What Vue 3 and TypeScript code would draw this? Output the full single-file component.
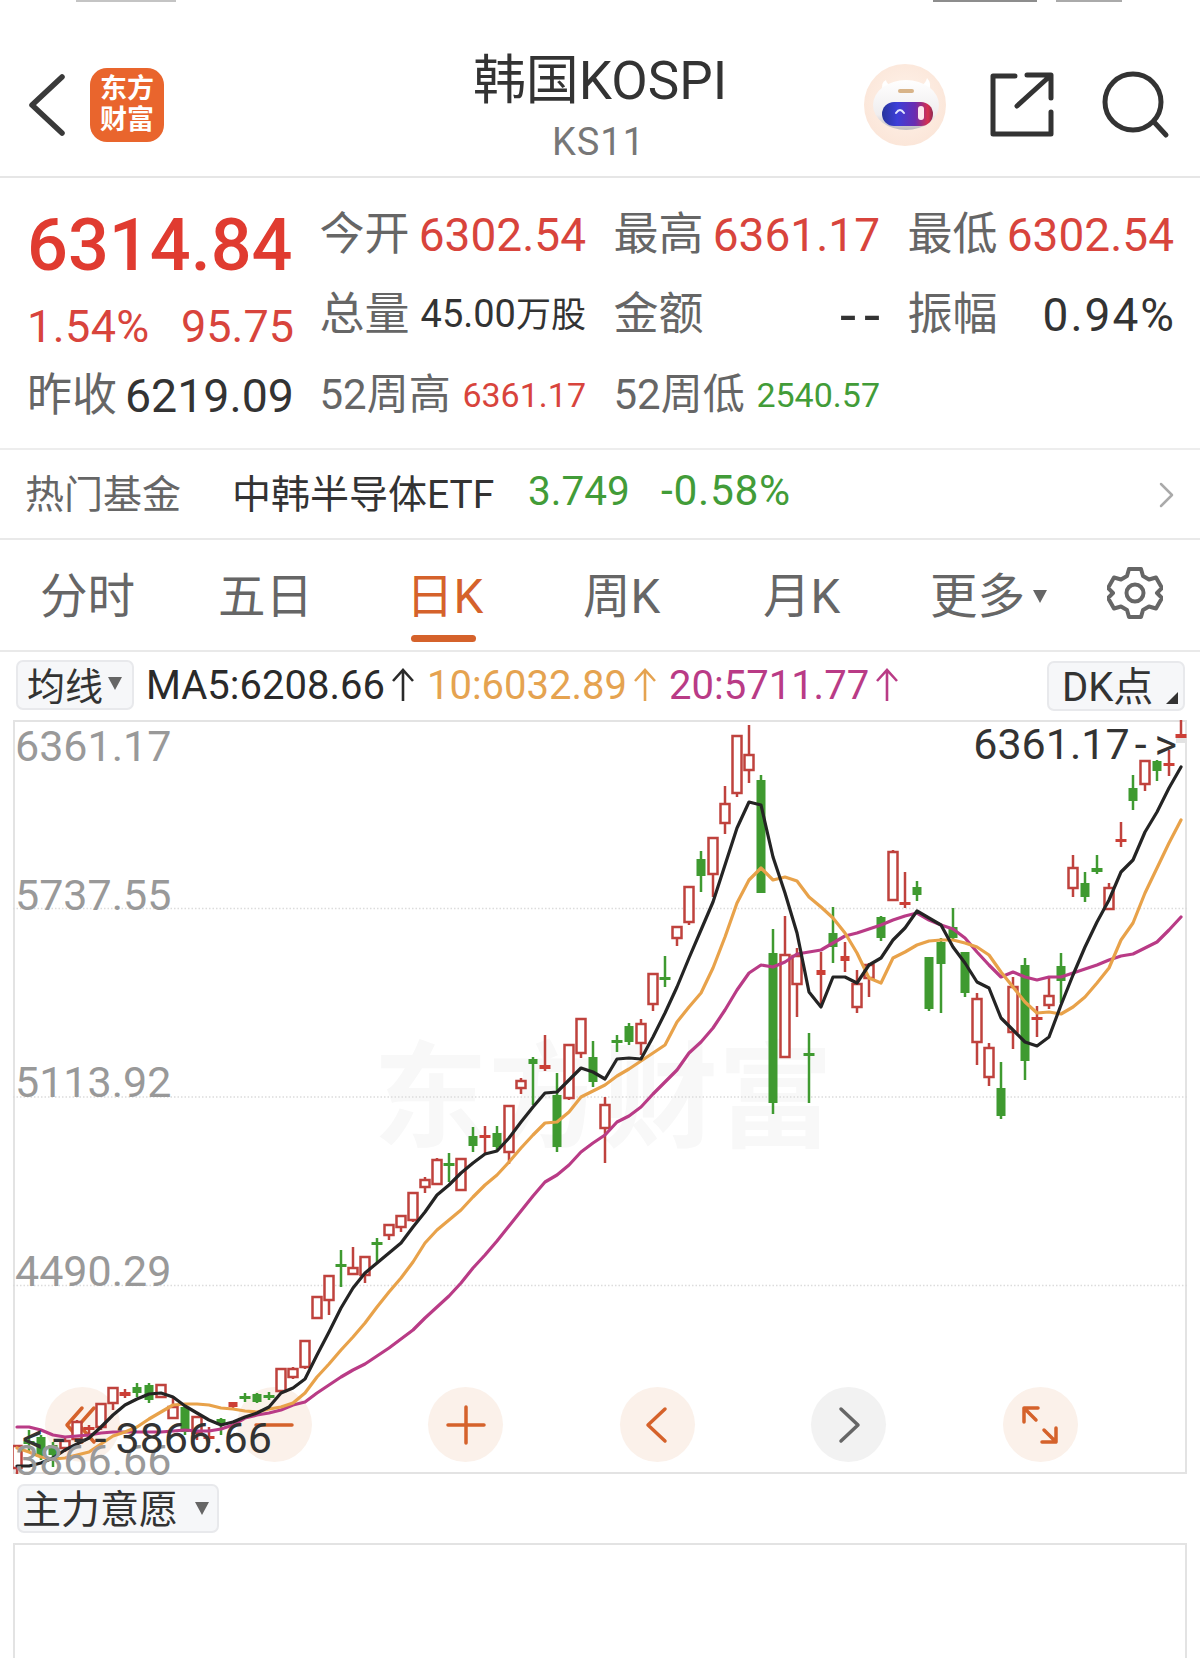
<script setup lang="ts">
type Candle = [number, number, number, number, number];

// kind (1 rising, 0 falling), high, body top, body bottom, low — y in page pixels
const rows: Candle[] = [
  [1,1446,1446,1468,1475],[0,1430,1441,1444,1452],[0,1435,1437,1457,1460],[0,1442,1445,1455,1467],
  [1,1438,1441,1448,1452],[1,1420,1422,1439,1442],[1,1425,1427,1430,1438],[1,1404,1404,1427,1430],
  [1,1388,1388,1403,1410],[1,1389,1392,1396,1398],[0,1383,1387,1393,1397],[0,1383,1385,1400,1403],
  [1,1385,1385,1397,1397],[1,1398,1407,1418,1418],[0,1405,1407,1432,1435],[1,1417,1417,1433,1440],
  [1,1427,1436,1438,1443],[0,1418,1419,1425,1435],[1,1402,1402,1407,1409],[0,1393,1396,1398,1402],
  [0,1393,1394,1402,1403],[0,1392,1395,1397,1400],[1,1369,1369,1391,1393],[1,1367,1369,1377,1379],
  [1,1341,1341,1367,1369],[1,1297,1297,1318,1318],[1,1276,1276,1300,1315],[0,1250,1264,1267,1287],
  [1,1247,1268,1274,1274],[1,1257,1257,1275,1283],[0,1238,1242,1245,1262],[1,1225,1225,1235,1240],
  [1,1216,1216,1227,1232],[1,1193,1193,1220,1222],[1,1177,1180,1187,1193],[1,1158,1160,1184,1184],
  [0,1153,1163,1166,1182],[1,1159,1159,1190,1190],[0,1127,1136,1146,1152],[1,1126,1135,1137,1153],
  [0,1126,1133,1147,1150],[1,1106,1106,1152,1164],[1,1078,1081,1088,1094],[0,1057,1059,1064,1105],
  [1,1035,1065,1069,1071],[0,1073,1095,1147,1152],[1,1045,1045,1098,1100],[1,1019,1019,1053,1058],
  [0,1041,1057,1082,1087],[1,1097,1105,1128,1163],[0,1035,1040,1043,1052],[0,1023,1026,1042,1045],
  [1,1019,1024,1043,1055],[1,974,974,1004,1011],[0,956,977,979,987],[1,927,927,938,946],
  [1,887,887,922,925],[0,851,859,876,892],[1,838,838,874,897],[1,786,804,823,834],
  [1,735,736,793,797],[1,725,755,770,783],[0,775,780,893,893],[0,929,953,1103,1114],
  [1,916,955,1057,1057],[1,948,956,984,1017],[0,1033,1053,1055,1103],[1,952,970,975,1007],
  [0,907,933,947,963],[1,942,956,961,972],[1,970,984,1007,1013],[1,963,965,978,997],
  [0,916,917,938,941],[1,850,852,900,900],[1,872,902,904,908],[0,881,887,895,901],
  [0,957,957,1009,1011],[0,938,942,964,1013],[0,908,927,938,940],[0,952,952,993,997],
  [1,993,999,1042,1065],[1,1043,1048,1077,1086],[0,1062,1088,1116,1119],[1,977,987,1032,1049],
  [0,958,965,1061,1080],[1,1006,1017,1019,1037],[1,978,996,1005,1009],[0,953,966,981,1003],
  [1,855,868,888,897],[0,872,883,897,902],[0,855,868,872,874],[1,883,888,909,910],
  [1,822,839,842,847],[0,775,788,801,810],[1,760,761,784,791],[0,760,761,771,781],
  [1,750,763,765,776],[1,720,734,738,738],
];

const ma5 = [
  1466,1466,1463,1458,1450,1444,1438,1427,1415,1405,1399,1394,1393,1397,1406,1413,1420,1425,1422,1417,
  1413,1407,1393,1388,1379,1355,1332,1308,1288,1273,1263,1253,1243,1227,1212,1195,1185,1173,1163,1154,
  1151,1138,1122,1107,1093,1092,1080,1068,1072,1079,1059,1058,1059,1037,1013,987,958,930,902,865,
  828,802,805,857,893,933,992,1007,977,977,983,965,958,940,928,911,918,925,947,963,
  982,988,1018,1030,1042,1046,1037,1005,975,947,922,900,872,860,832,812,788,767,
];
const ma10 = [
  1448,1452,1457,1459,1458,1455,1452,1444,1436,1432,1427,1419,1412,1405,1404,1404,1405,1408,1409,1411,
  1412,1409,1407,1403,1393,1377,1364,1350,1337,1323,1307,1292,1278,1262,1243,1230,1220,1210,1197,1185,
  1175,1162,1148,1135,1123,1122,1112,1097,1091,1085,1076,1069,1061,1053,1045,1022,1007,993,968,937,
  903,880,868,880,877,881,897,907,918,933,953,978,983,958,952,945,941,940,940,943,
  947,955,972,987,1002,1013,1012,1014,1007,997,983,968,940,923,893,868,843,820,
];
const ma20 = [
  1427,1427,1430,1435,1437,1436,1435,1433,1432,1432,1432,1432,1432,1431,1430,1431,1431,1429,1425,1418,
  1415,1413,1410,1405,1402,1393,1385,1377,1370,1364,1356,1348,1339,1330,1318,1307,1296,1283,1268,1255,
  1241,1226,1211,1196,1182,1175,1165,1152,1143,1135,1122,1116,1107,1094,1082,1070,1053,1042,1028,1010,
  990,973,965,967,962,954,952,950,943,936,933,929,925,920,916,913,920,925,929,938,
  952,965,977,972,977,980,977,977,973,969,965,960,956,954,948,942,930,917,
];

const xAt = (i: number) => 17 + 12 * i;
const candles = rows.map(([up, high, top, bottom, low], i) => ({
  x: xAt(i),
  up: up === 1,
  hollow: up === 1 && bottom - top >= 6,
  high,
  low,
  top,
  height: Math.max(bottom - top, 3),
}));
const toPoints = (values: number[]) => values.map((y, i) => `${xAt(i)},${y}`).join(" ");
const averages = [
  { color: "#b93b86", points: toPoints(ma20) },
  { color: "#e8a24a", points: toPoints(ma10) },
  { color: "#242424", points: toPoints(ma5) },
];

const stats = [
  [
    { label: "今开", value: "6302.54", tone: "red" },
    { label: "最高", value: "6361.17", tone: "red" },
    { label: "最低", value: "6302.54", tone: "red" },
  ],
  [
    { label: "总量", value: "45.00", unit: "万股", tone: "dark small" },
    { label: "金额", value: "--", tone: "dark dash" },
    { label: "振幅", value: "0.94%", tone: "dark spaced" },
  ],
  [
    { label: "52周高", value: "6361.17", tone: "red tiny" },
    { label: "52周低", value: "2540.57", tone: "green tiny" },
  ],
];
const tabs = ["分时", "五日", "日K", "周K", "月K"];
const movingAverages = [
  { text: "MA5:6208.66", tone: "black" },
  { text: "10:6032.89", tone: "orange" },
  { text: "20:5711.77", tone: "pink" },
];
const axis = [
  { text: "6361.17", y: 745 },
  { text: "5737.55", y: 894 },
  { text: "5113.92", y: 1081 },
  { text: "4490.29", y: 1270 },
  { text: "3866.66", y: 1459 },
];
const gridRows = [908.5, 1097, 1285.5];
const axisTop = (y: number) => ({ top: `${y - 745}px` });
</script>

<template>
  <div class="page">
    <div class="status">
      <i class="bit bit-time"></i>
      <i class="bit bit-net"></i>
      <i class="bit bit-batt"></i>
    </div>

    <header class="head">
      <svg class="back" width="40" height="64" viewBox="0 0 40 64">
        <path d="M35 4 L5 32 L35 60" fill="none" stroke="#3a3a3a" stroke-width="5.5" stroke-linecap="round" stroke-linejoin="round" />
      </svg>
      <div class="logo"><span>东方</span><span>财富</span></div>
      <div class="title">
        <div class="name">韩国KOSPI</div>
        <div class="code">KS11</div>
      </div>
      <svg class="robot" width="84" height="84" viewBox="0 0 84 84">
        <defs>
          <radialGradient id="halo" cx="50%" cy="45%" r="55%">
            <stop offset="0%" stop-color="#fff3ea" />
            <stop offset="100%" stop-color="#fbe6d9" />
          </radialGradient>
          <linearGradient id="shell" x1="0" y1="0" x2="0" y2="1">
            <stop offset="0%" stop-color="#ffffff" />
            <stop offset="70%" stop-color="#efedee" />
            <stop offset="100%" stop-color="#bdb9bd" />
          </linearGradient>
          <linearGradient id="visor" x1="0" y1="0" x2="1" y2="0">
            <stop offset="0%" stop-color="#27359c" />
            <stop offset="30%" stop-color="#3c3fd8" />
            <stop offset="65%" stop-color="#6a2cb0" />
            <stop offset="90%" stop-color="#d62f4f" />
            <stop offset="100%" stop-color="#8c2b55" />
          </linearGradient>
        </defs>
        <circle cx="42" cy="42" r="41" fill="url(#halo)" />
        <path d="M20 28 Q17 20 23 17 Q24 24 34 22 Z M66 28 Q69 20 64 15 Q62 24 52 22 Z" fill="#fff" />
        <ellipse cx="43" cy="42" rx="33" ry="25" fill="url(#shell)" />
        <rect x="35" y="26" width="16" height="4" rx="2" fill="#d8b489" />
        <rect x="19" y="39" width="51" height="24" rx="12" fill="url(#visor)" />
        <path d="M33 50 Q37 44 41 50" fill="none" stroke="#e3e7ff" stroke-width="2" stroke-linecap="round" />
        <rect x="55" y="43" width="6" height="14" rx="3" fill="#fde8ee" />
      </svg>
      <svg class="share" width="66" height="66" viewBox="0 0 66 66">
        <path d="M26 4 H4 V62 H62 V40" fill="none" stroke="#333" stroke-width="5" stroke-linejoin="round" stroke-linecap="round" />
        <path d="M28 34 L61 4 M38 3 H62 V26" fill="none" stroke="#333" stroke-width="5" stroke-linejoin="round" stroke-linecap="round" />
      </svg>
      <svg class="search" width="68" height="68" viewBox="0 0 68 68">
        <circle cx="31" cy="31" r="28" fill="none" stroke="#333" stroke-width="5" />
        <path d="M52 51 L64 64" fill="none" stroke="#333" stroke-width="5" stroke-linecap="round" />
      </svg>
    </header>

    <section class="stats">
      <div class="quote">
        <div class="last">6314.84</div>
        <div class="change"><span class="pct">1.54%</span><span>95.75</span></div>
        <div class="prev"><span class="label">昨收</span><span class="prev-value">6219.09</span></div>
      </div>
      <div class="cells">
        <div v-for="(row, r) in stats" :key="r" class="cell-row">
          <div v-for="cell in row" :key="cell.label" class="cell">
            <span class="label">{{ cell.label }}</span>
            <span class="value" :class="cell.tone">{{ cell.value }}<span v-if="cell.unit" class="unit">{{ cell.unit }}</span></span>
          </div>
        </div>
      </div>
    </section>

    <section class="fund">
      <span class="fund-tag">热门基金</span>
      <span class="fund-name">中韩半导体ETF</span>
      <span class="fund-price">3.749</span>
      <span class="fund-pct">-0.58%</span>
      <svg class="fund-more" width="16" height="26" viewBox="0 0 16 26">
        <path d="M2 2 L13 13 L2 24" fill="none" stroke="#aaa" stroke-width="2.5" stroke-linecap="round" stroke-linejoin="round" />
      </svg>
    </section>

    <nav class="tabs">
      <div v-for="t in tabs" :key="t" class="tab" :class="{ on: t === '日K' }">{{ t }}</div>
      <div class="tab more">更多<i class="tri"></i></div>
      <svg class="gear" width="56" height="56" viewBox="0 0 56 56">
        <path d="M22 4 H34 L36 11 L42 14.500 L49 12.500 L55 23 L50 28 L55 33 L49 43.500 L42 41.500 L36 45 L34 52 H22 L20 45 L14 41.500 L7 43.500 L1 33 L6 28 L1 23 L7 12.500 L14 14.500 L20 11 Z" fill="none" stroke="#666" stroke-width="4" stroke-linejoin="round" />
        <circle cx="28" cy="28" r="8.500" fill="none" stroke="#666" stroke-width="4" />
      </svg>
    </nav>

    <section class="ma-row">
      <div class="pick ma-pick">均线<i class="tri small"></i></div>
      <template v-for="m in movingAverages" :key="m.text">
        <span class="ma" :class="m.tone">{{ m.text }}</span>
        <svg class="arrow" :class="m.tone" width="24" height="34" viewBox="0 0 24 34">
          <path d="M12 33 V2 M2 13 L12 2 L22 13" fill="none" stroke="currentColor" stroke-width="2.600" />
        </svg>
      </template>
      <div class="pick dk">DK点<i class="corner"></i></div>
    </section>

    <section class="chart">
      <div class="watermark">东方财富</div>

      <div class="zoom-row">
        <button class="round">
          <svg width="40" height="40" viewBox="-20 -20 40 40"><path d="M-1 -17 L-16 0 L-1 17 M11 -17 L-4 0 L11 17" class="ico" /></svg>
        </button>
        <button class="round">
          <svg width="40" height="40" viewBox="-20 -20 40 40"><path d="M-18 0 H18" class="ico" /></svg>
        </button>
        <button class="round">
          <svg width="40" height="40" viewBox="-20 -20 40 40"><path d="M-18 0 H18 M0 -18 V18" class="ico" /></svg>
        </button>
        <button class="round">
          <svg width="40" height="40" viewBox="-20 -20 40 40"><path d="M8 -16 L-9 0 L8 16" class="ico" /></svg>
        </button>
        <button class="round off">
          <svg width="40" height="40" viewBox="-20 -20 40 40"><path d="M-8 -16 L9 0 L-8 16" class="ico gray" /></svg>
        </button>
        <button class="round">
          <svg width="44" height="44" viewBox="-22 -22 44 44"><path d="M-16 -3 V-17 H-2 M-16 -17 L-4 -5 M16 3 V17 H2 M16 17 L4 5" class="ico" /></svg>
        </button>
      </div>

      <svg class="plot" width="1174" height="754" viewBox="13 720 1174 754">
        <line v-for="y in gridRows" :key="y" x1="13" x2="1187" :y1="y" :y2="y" class="grid" />
        <rect x="1176" y="737" width="11" height="6" fill="#e3e3e3" />
        <g v-for="c in candles" :key="c.x">
          <line :x1="c.x" :x2="c.x" :y1="c.high" :y2="c.low" :class="c.up ? 'wick-up' : 'wick-down'" />
          <rect v-if="c.hollow" :x="c.x - 4.500" :y="c.top" width="9" :height="c.height" class="body-hollow" />
          <rect v-else-if="c.height > 4" :x="c.x - 4.500" :y="c.top" width="9" :height="c.height" :class="c.up ? 'body-up' : 'body-down'" />
          <rect v-else :x="c.x - 5.500" :y="c.top" width="11" :height="c.height" :class="c.up ? 'body-up' : 'body-down'" />
        </g>
        <polyline v-for="m in averages" :key="m.color" :points="m.points" :stroke="m.color" class="avg" />
      </svg>

      <span v-for="a in axis" :key="a.text" class="axis" :style="axisTop(a.y)">{{ a.text }}</span>
      <span class="mark mark-high">6361.17<span class="wide-tail">-&gt;</span></span>
      <span class="mark mark-low"><span class="wide-head">&lt;---</span>3866.66</span>
    </section>

    <section class="sub-row">
      <div class="pick power">主力意愿<i class="tri"></i></div>
    </section>
    <section class="sub-chart"></section>
  </div>
</template>

<style scoped>
.page {
  width: 1200px;
  height: 1658px;
  overflow: hidden;
  background: #fff;
  color: #333;
  font-family: Roboto, "Noto Sans CJK SC", sans-serif;
}

.status {
  height: 4px;
  position: relative;
  display: flex;
}
.bit {
  display: block;
  height: 2px;
  background: #8d8d8d;
}
.bit-time {
  width: 100px;
  margin-left: 76px;
  background: #c4c4c4;
}
.bit-net {
  width: 104px;
  margin-left: 757px;
}
.bit-batt {
  width: 66px;
  margin-left: 19px;
  background: #aaa;
}

.head {
  height: 172px;
  border-bottom: 2px solid #e6e6e6;
  display: flex;
  align-items: center;
  position: relative;
}
.back {
  margin-left: 27px;
  margin-top: 29px;
}
.logo {
  width: 74px;
  height: 74px;
  margin-left: 23px;
  margin-top: 29px;
  border-radius: 17px;
  background: #e9652d;
  color: #fff;
  font-size: 27px;
  line-height: 31px;
  font-weight: 700;
  display: flex;
  flex-direction: column;
  align-items: center;
  justify-content: center;
}
.title {
  position: absolute;
  left: 300px;
  width: 600px;
  top: 46px;
  text-align: center;
}
.name {
  font-size: 53px;
  line-height: 62px;
  color: #333;
}
.code {
  margin-top: 5px;
  margin-left: -3px;
  font-size: 38px;
  line-height: 50px;
  color: #777;
  letter-spacing: 1px;
}
.robot {
  margin-left: auto;
  margin-top: 29px;
}
.share {
  margin-left: 42px;
  margin-top: 29px;
}
.search {
  margin-left: 47px;
  margin-right: 30px;
  margin-top: 29px;
}

.stats {
  height: 269.500px;
  border-bottom: 2px solid #ededed;
  display: flex;
}
.quote {
  width: 264px;
  margin-left: 27px;
  flex: none;
}
.last {
  margin-top: 28px;
  font-size: 72px;
  line-height: 80px;
  font-weight: 500;
  color: #e03b30;
}
.change {
  display: flex;
  justify-content: space-between;
  margin-right: -3px;
  font-size: 45px;
  line-height: 82px;
  color: #d8443c;
}
.pct {
  letter-spacing: 0.4px;
}
.prev {
  margin-top: 3px;
  margin-right: -3px;
  display: flex;
  justify-content: space-between;
  align-items: center;
  height: 50px;
  line-height: 50px;
}
.prev-value {
  font-size: 46.500px;
  color: #333;
}
.label {
  font-size: 45px;
  color: #666;
  white-space: nowrap;
}
.cells {
  margin-left: 28.500px;
  padding-top: 16.500px;
}
.cell-row {
  display: flex;
  gap: 27.500px;
  height: 80px;
  align-items: center;
}
.cell {
  width: 266.500px;
  display: flex;
  justify-content: space-between;
  align-items: center;
  line-height: 60px;
}
.value {
  font-size: 46px;
  white-space: nowrap;
}
.unit {
  font-size: 35px;
}
.small {
  font-size: 38px;
}
.tiny {
  font-size: 34px;
}
.dash {
  font-size: 58px;
  letter-spacing: 8px;
  margin-right: -8px;
}
.spaced {
  letter-spacing: 2px;
  margin-right: -2px;
}
.red {
  color: #d8443c;
}
.dark {
  color: #333;
}
.green {
  color: #429c38;
}
.cell-row:last-child .label {
  font-size: 42px;
}

.fund {
  height: 82px;
  padding-bottom: 6px;
  border-bottom: 2px solid #e9e9e9;
  display: flex;
  align-items: center;
  font-size: 39px;
  position: relative;
}
.fund-tag {
  margin-left: 25px;
  width: 207px;
  color: #666;
}
.fund-name {
  width: 296px;
  color: #333;
}
.fund-price {
  width: 133px;
  color: #429c38;
  font-size: 40.500px;
}
.fund-pct {
  color: #429c38;
  font-size: 42.500px;
  letter-spacing: 0.7px;
}
.fund-more {
  position: absolute;
  right: 25px;
  top: 32px;
}

.tabs {
  height: 106.500px;
  padding-top: 4px;
  border-bottom: 2px solid #e9e9e9;
  display: grid;
  grid-template-columns: 178px 188px 177px 180px 167px 177px auto;
  padding-left: 40px;
  align-items: center;
  position: relative;
  font-size: 47.500px;
  line-height: 60px;
  color: #666;
}
.tab {
  white-space: nowrap;
}
.tab.on {
  color: #d5622b;
  position: relative;
}
.tab.on::after {
  content: "";
  position: absolute;
  left: 5px;
  bottom: -15px;
  width: 65px;
  height: 7px;
  border-radius: 4px;
  background: #d5622b;
}
.more {
  display: flex;
  align-items: center;
}
.tri {
  display: block;
  margin-left: 8px;
  width: 0;
  height: 0;
  border-left: 7px solid transparent;
  border-right: 7px solid transparent;
  border-top: 13px solid #666;
}
.tri.small {
  margin-left: 5px;
}
.gear {
  margin-top: -8px;
}

.ma-row {
  height: 66px;
  padding-bottom: 2px;
  display: flex;
  align-items: center;
  font-size: 40px;
  padding-left: 16px;
  position: relative;
}
.pick {
  box-sizing: border-box;
  background: #f6f7f9;
  border: 2px solid #e8e9ec;
  border-radius: 7px;
  display: flex;
  align-items: center;
  color: #333;
}
.ma-pick {
  width: 118px;
  height: 50px;
  padding-left: 9px;
  padding-bottom: 3px;
  font-size: 38px;
  margin-right: 12px;
}
.ma {
  white-space: nowrap;
}
.arrow {
  margin-left: 6px;
  margin-right: 12px;
}
.black {
  color: #2a2a2a;
}
.orange {
  color: #e5a350;
}
.pink {
  color: #b93b86;
}
.dk {
  position: absolute;
  left: 1047px;
  top: 9px;
  width: 138px;
  height: 50px;
  padding-left: 13px;
  padding-bottom: 5px;
  font-size: 40px;
}
.corner {
  position: absolute;
  right: 5px;
  bottom: 5px;
  width: 0;
  height: 0;
  border-left: 12px solid transparent;
  border-bottom: 12px solid #333;
}

.chart {
  box-sizing: border-box;
  margin-left: 13px;
  width: 1174px;
  height: 754px;
  border: 2px solid #e3e3e3;
  position: relative;
}
.watermark {
  position: absolute;
  left: 358px;
  top: 312px;
  font-size: 115px;
  line-height: 130px;
  font-weight: 700;
  color: #f8f8f8;
  white-space: nowrap;
}
.zoom-row {
  position: absolute;
  left: 30px;
  top: 665px;
  display: flex;
  gap: 116.600px;
}
.round {
  width: 75px;
  height: 75px;
  padding: 0;
  border: 0;
  border-radius: 50%;
  background: #fbf1ea;
  display: flex;
  align-items: center;
  justify-content: center;
}
.round.off {
  background: #f2f2f2;
}
.ico {
  fill: none;
  stroke: #d5622b;
  stroke-width: 3.500;
  stroke-linecap: round;
  stroke-linejoin: round;
}
.ico.gray {
  stroke: #666;
}
.plot {
  position: absolute;
  left: -2px;
  top: -2px;
}
.grid {
  stroke: #dcdcdc;
  stroke-width: 1.500;
  stroke-dasharray: 1.500 2;
}
.wick-up {
  stroke: #bf423d;
  stroke-width: 2.500;
}
.wick-down {
  stroke: #3f9a30;
  stroke-width: 2.500;
}
.body-hollow {
  fill: #fff;
  stroke: #bf423d;
  stroke-width: 2.500;
}
.body-up {
  fill: #cc3f36;
}
.body-down {
  fill: #3f9a30;
}
.avg {
  fill: none;
  stroke-width: 3.200;
  stroke-linejoin: round;
  stroke-linecap: round;
}
.axis {
  position: absolute;
  left: 0;
  font-size: 43px;
  line-height: 48px;
  color: #999;
}
.mark {
  position: absolute;
  font-size: 43px;
  line-height: 48px;
  color: #333;
  white-space: nowrap;
}
.mark-high {
  right: 8px;
  top: -2px;
}
.wide-tail {
  letter-spacing: 8px;
  margin-left: 5px;
  margin-right: -8px;
}
.mark-low {
  left: 7px;
  top: 692px;
}
.wide-head {
  letter-spacing: 9px;
}

.sub-row {
  height: 69px;
  display: flex;
  align-items: center;
}
.power {
  width: 202px;
  height: 49px;
  margin-left: 17px;
  padding-left: 3px;
  padding-bottom: 6px;
  font-size: 39px;
  white-space: nowrap;
}
.power .tri {
  margin-left: 17px;
  margin-top: 6px;
}
.sub-chart {
  box-sizing: border-box;
  margin-left: 13px;
  width: 1174px;
  height: 140px;
  border: 2px solid #e3e3e3;
}
</style>
